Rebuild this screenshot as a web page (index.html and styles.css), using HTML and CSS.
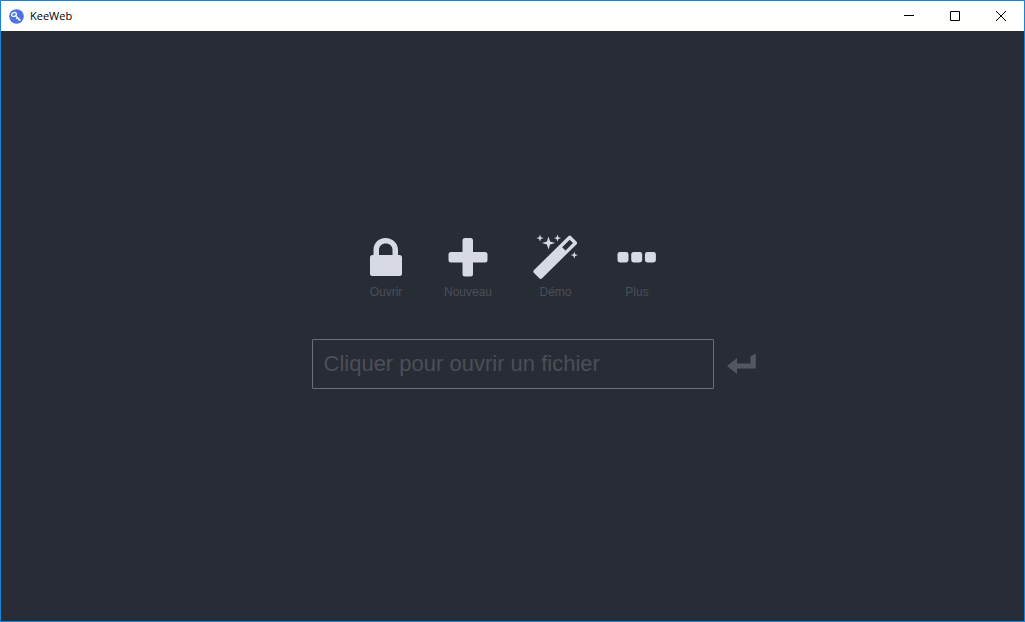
FILE: index.html
```html
<!DOCTYPE html>
<html lang="fr">
<head>
<meta charset="utf-8">
<title>KeeWeb</title>
<link rel="stylesheet" href="styles.css">
</head>
<body>
<div class="window">
  <header class="titlebar">
    <svg class="logo" viewBox="0 0 15 15" aria-hidden="true">
      <circle cx="7.5" cy="7.5" r="7.3" fill="#4d73e2"/>
      <g fill="none" stroke="#fff" stroke-width="1.3">
        <ellipse cx="5" cy="5.500" rx="2.500" ry="1.800" transform="rotate(-25 5 5.500)"/>
        <path d="M6.500 6.800l5 4.600M8.600 8.700l-1.500 1M10.300 10.200l-1.200 1.200"/>
      </g>
    </svg>
    <h1 class="title">KeeWeb</h1>
    <div class="controls">
      <button class="control" type="button" aria-label="Réduire"><svg viewBox="0 0 10 10"><path d="M0 4.500h10"/></svg></button>
      <button class="control" type="button" aria-label="Agrandir"><svg viewBox="0 0 10 10"><path d="M.5.5h9v9h-9z"/></svg></button>
      <button class="control" type="button" aria-label="Fermer"><svg viewBox="0 0 10 10"><path d="M0 0l10 10M10 0L0 10"/></svg></button>
    </div>
  </header>
  <main class="open">
    <nav class="actions">
      <button class="action" type="button">
        <svg class="icon icon-lock" viewBox="0 0 34 48" aria-hidden="true"><path fill-rule="evenodd" d="M4.500 22v-5C4.500 10 9.500 5 16.500 5S29 10 29 17v5h1.500Q33 22 33 24.500v16Q33 43 30.500 43h-27Q1 43 1 40.500v-16Q1 22 3.500 22zM10 22h13.500v-5c0-4-2.800-6.500-6.700-6.500S10 13 10 17z"/></svg>
        <span>Ouvrir</span>
      </button>
      <button class="action action-new" type="button">
        <svg class="icon" viewBox="0 0 40 48" aria-hidden="true"><path d="M17 5h5.500q2.500 0 2.500 2.500V19h12q2.500 0 2.500 2.500v5.500q0 2.500-2.500 2.500H25v11.500q0 2.500-2.500 2.500H17q-2.500 0-2.500-2.500V29.500H3q-2.500 0-2.500-2.500v-5.500Q.5 19 3 19h11.500V7.500Q14.500 5 17 5z"/></svg>
        <span>Nouveau</span>
      </button>
      <button class="action" type="button">
        <svg class="icon icon-magic" viewBox="0 0 45 48" aria-hidden="true">
          <path fill-rule="evenodd" d="M35.300 3.300q1.400-1.400 2.800 0l5.300 5.300q1.400 1.400 0 2.800L9.100 45.200q-1.400 1.400-2.800 0L1 39.900q-1.400-1.400 0-2.800zM36.700 6.800l-7.500 7.500 3.300 3.300 7.500-7.500z"/>
          <path d="M15.500 3.500l1.600 5 5 1.500-5 1.500-1.600 5-1.600-5-5-1.500 5-1.500zM7 1.500l.9 2.700 2.700.8-2.700.9-.9 2.700-.9-2.700L3.400 5l2.700-.8zM24.500 1.500l.9 2.700 2.700.8-2.700.9-.9 2.700-.9-2.700-2.700-.9 2.700-.8zM41.300 18.500l.9 2.700 2.700.9-2.700.9-.9 2.700-.9-2.700-2.700-.9 2.700-.9z"/>
        </svg>
        <span>Démo</span>
      </button>
      <button class="action" type="button">
        <svg class="icon icon-dots" viewBox="0 0 38 48" aria-hidden="true"><rect x="-.5" y="19" width="11" height="10.500" rx="2.400"/><rect x="13.200" y="19" width="11" height="10.500" rx="2.400"/><rect x="26.900" y="19" width="11" height="10.500" rx="2.400"/></svg>
        <span>Plus</span>
      </button>
    </nav>
    <form class="unlock">
      <input class="password" type="text" placeholder="Cliquer pour ouvrir un fichier" aria-label="Cliquer pour ouvrir un fichier" readonly>
      <button class="enter" type="button" aria-label="Valider"><svg viewBox="0 0 30 22" aria-hidden="true"><path d="M28.800.5V15.500H10V21L0 13 10 5v5.500h13.500V3.500z"/></svg></button>
    </form>
  </main>
</div>
</body>
</html>
```
FILE: styles.css
```css
* { box-sizing: border-box; }

body {
  margin: 0;
  background: #282c34;
  font-family: "Liberation Sans", Arial, sans-serif;
}

button {
  padding: 0;
  border: 0;
  background: none;
  font: inherit;
  color: inherit;
}

.window {
  display: flex;
  flex-direction: column;
  min-height: 100vh;
  border: 1px solid #1883d7;
}

.titlebar {
  display: flex;
  align-items: center;
  height: 30px;
  padding-left: 8px;
  background: #fff;
  color: #000;
}

.logo {
  width: 15px;
  height: 15px;
}

.title {
  margin: 0 0 0 6px;
  font: 11px/16px "Open Sans", "Noto Sans", sans-serif;
}

.controls {
  display: flex;
  margin-left: auto;
}

.control {
  display: grid;
  place-items: center;
  width: 46px;
  height: 30px;
}

.control svg {
  width: 10px;
  height: 10px;
  overflow: visible;
  fill: none;
  stroke: #000;
}

.open {
  flex: 1;
  display: flex;
  flex-direction: column;
  justify-content: center;
  gap: 36px;
  padding-bottom: 30px;
  color: #4b4f59;
}

.actions {
  display: flex;
  justify-content: center;
  gap: 40px;
}

.action {
  display: flex;
  flex-direction: column;
  align-items: center;
  font-size: 12px;
  line-height: 22px;
}

.action-new { min-width: 50px; }

.icon {
  width: 40px;
  height: 48px;
  overflow: visible;
  fill: #d7dae2;
}

.icon-lock { width: 34px; }

.icon-magic { width: 45px; }

.icon-dots { width: 38px; }

.unlock {
  display: grid;
  grid-template-columns: 1fr minmax(0, 402px) 1fr;
  align-items: center;
}

.password {
  grid-column: 2;
  width: 100%;
  height: 50px;
  padding: 0 11px;
  border: 1px solid #6b6f7b;
  border-radius: 1px;
  outline: 0;
  background: transparent;
  font: 22px/28px "Liberation Sans", Arial, sans-serif;
  color: #d7dae2;
}

.password::placeholder {
  color: #4b4f59;
  opacity: 1;
}

.enter {
  justify-self: start;
  margin-left: 13px;
}

.enter svg {
  display: block;
  width: 30px;
  height: 22px;
  fill: #535761;
}
```
